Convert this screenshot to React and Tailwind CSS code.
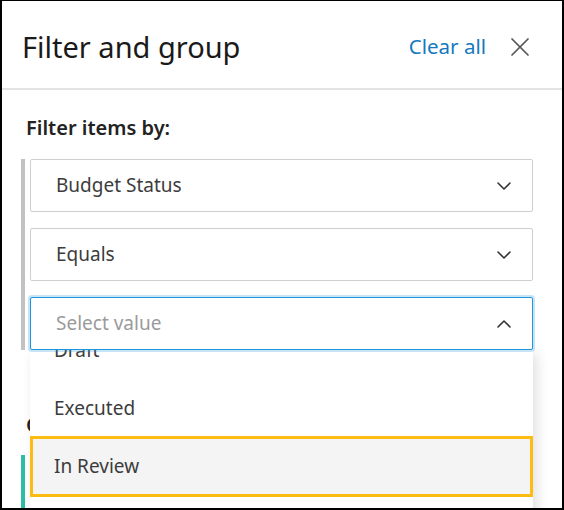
import { ChevronDown, ChevronUp, X } from "lucide-react";

const font = { fontFamily: '"Noto Sans", "Open Sans", sans-serif' };

function SelectBox({ label, placeholder, open }) {
  return (
    <div
      className={`relative z-10 flex h-[53px] items-center justify-between rounded-[2px] border bg-white pl-[25px] pr-[16px] ${
        open ? "border-[#1e96dc] shadow-[0_0_0_2px_rgba(30,150,220,0.25)]" : "border-[#cfcfcf]"
      }`}
    >
      <span className={`text-[19px] ${placeholder ? "text-[#9a9a9a]" : "text-[#3c3c3c]"}`}>{label}</span>
      {open ? (
        <ChevronUp className="h-[24px] w-[24px] text-[#333]" strokeWidth={1.6} />
      ) : (
        <ChevronDown className="h-[24px] w-[24px] text-[#333]" strokeWidth={1.6} />
      )}
    </div>
  );
}

export default function App() {
  return (
    <div className="h-[510px] w-[564px] overflow-hidden border-2 border-t border-black bg-white" style={font}>
      {/* Header */}
      <div className="flex h-[89px] items-center justify-between border-b-2 border-[#e3e3e3] pl-[20px] pr-[26px] pt-[4px]">
        <h1 className="text-[29px] text-[#1a1a1a]">Filter and group</h1>
        <div className="flex items-center gap-[18px]">
          <span className="text-[20.5px] text-[#1479bf]">Clear all</span>
          <X className="h-[32px] w-[32px] text-[#555]" strokeWidth={1.3} />
        </div>
      </div>

      {/* Body */}
      <div className="relative pl-[19px] pr-[29px] pt-[23px]">
        <p className="pl-[5px] text-[20px] font-semibold text-[#222]">Filter items by:</p>

        <div className="mt-[16px] flex">
          <div className="w-[4px] bg-[#c2c2c2]" />
          <div className="flex flex-1 flex-col gap-[16px] pl-[5px]">
            <SelectBox label="Budget Status" />
            <SelectBox label="Equals" />
            <div className="relative">
              <SelectBox label="Select value" placeholder open />
              {/* Dropdown, scrolled a little */}
              <div className="absolute left-0 right-0 top-[52px] h-[170px] overflow-hidden bg-white shadow-[4px_4px_12px_rgba(0,0,0,0.12)]">
                <div className="-mt-[28px] flex flex-col text-[19px] text-[#3c3c3c]">
                  <div className="flex h-[59px] items-center pl-[24px]">Draft</div>
                  <div className="flex h-[56px] items-center pl-[24px]">Executed</div>
                  <div className="flex h-[61px] items-center border-[3px] border-[#fcbc14] bg-[#f4f4f4] pl-[21px]">
                    In Review
                  </div>
                  <div className="flex h-[59px] items-center pl-[24px]">Pending</div>
                </div>
              </div>
            </div>
          </div>
        </div>

        {/* Group section partly hidden behind dropdown */}
        <p className="mt-[60px] pl-[5px] text-[20px] font-semibold text-[#222]">Group by:</p>
        <div className="mt-[15px] flex">
          <div className="h-[60px] w-[4px] bg-[#2ebca6]" />
        </div>
      </div>
    </div>
  );
}
